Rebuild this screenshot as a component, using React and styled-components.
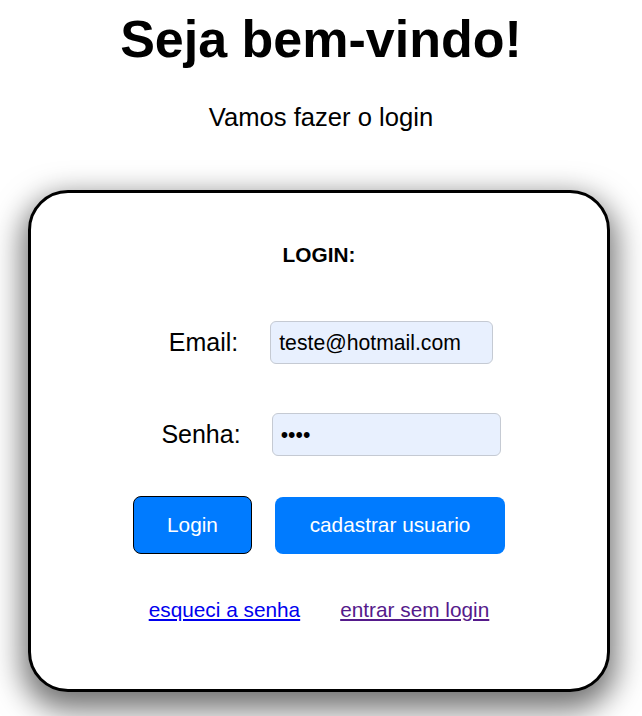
import React from "react";
import styled, { createGlobalStyle } from "styled-components";

const Global = createGlobalStyle`
  html, body { margin: 0; padding: 0; background: #fff; }
  body { font-family: "Liberation Sans", Arial, sans-serif; color: #000; }
`;

const Page = styled.div`
  display: flex;
  flex-direction: column;
  align-items: center;
  padding-bottom: 40px;
`;

const Title = styled.h1`
  margin: 9px 0 0;
  font-size: 52px;
  font-weight: 700;
  line-height: normal;
`;

const Subtitle = styled.p`
  margin: 34px 0 0;
  font-size: 25.6px;
  line-height: normal;
`;

const Card = styled.div`
  box-sizing: border-box;
  width: 582px;
  margin: 58px 0 0 28px;
  align-self: flex-start;
  border: 3px solid #000;
  border-radius: 40px;
  background: #fff;
  box-shadow: 0 12px 30px 6px rgba(0, 0, 0, 0.55);
  padding: 50px 0 67px;
  display: flex;
  flex-direction: column;
  align-items: center;
`;

const CardTitle = styled.h2`
  margin: 0;
  font-size: 20.8px;
  font-weight: 700;
  line-height: normal;
`;

const Row = styled.div`
  display: flex;
  align-items: center;
  justify-content: center;
  gap: ${(p) => p.$gap}px;
  margin-top: ${(p) => p.$top}px;
  padding-left: ${(p) => p.$shift || 0}px;
`;

const Label = styled.label`
  font-size: 25px;
  line-height: normal;
`;

const Input = styled.input`
  box-sizing: border-box;
  width: ${(p) => p.$w}px;
  height: 43px;
  padding: 0 8px;
  border: 1px solid #c5cad3;
  border-radius: 6px;
  background: #e8f0fe;
  font-family: "Liberation Sans", Arial, sans-serif;
  font-size: 21.2px;
  color: #000;
  outline: none;
`;

const Button = styled.button`
  box-sizing: border-box;
  width: ${(p) => p.$w}px;
  height: ${(p) => p.$h}px;
  border: ${(p) => (p.$outlined ? "1px solid #000" : "none")};
  border-radius: 8px;
  background: #007bff;
  color: #fff;
  font-family: "Liberation Sans", Arial, sans-serif;
  font-size: 20.8px;
  cursor: pointer;
`;

const Link = styled.a`
  font-size: 20.8px;
  line-height: normal;
  color: ${(p) => (p.$visited ? "#551a8b" : "#0000ee")};
  text-decoration: underline;
`;

export default function App() {
  return (
    <>
      <Global />
      <Page>
        <Title>Seja bem-vindo!</Title>
        <Subtitle>Vamos fazer o login</Subtitle>
        <Card>
          <CardTitle>LOGIN:</CardTitle>
          <Row $gap={32} $top={54} $shift={24}>
            <Label>Email:</Label>
            <Input $w={223} type="email" defaultValue="teste@hotmail.com" />
          </Row>
          <Row $gap={31} $top={49} $shift={24}>
            <Label>Senha:</Label>
            <Input $w={229} type="password" defaultValue="1234" />
          </Row>
          <Row $gap={23} $top={40}>
            <Button $w={119} $h={58} $outlined>Login</Button>
            <Button $w={230} $h={57}>cadastrar usuario</Button>
          </Row>
          <Row $gap={40} $top={44}>
            <Link href="#">esqueci a senha</Link>
            <Link href="#" $visited>entrar sem login</Link>
          </Row>
        </Card>
      </Page>
    </>
  );
}
